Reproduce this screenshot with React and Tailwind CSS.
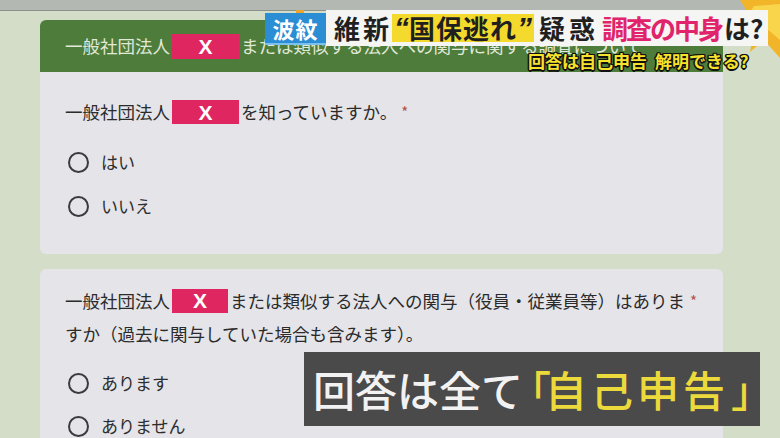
import React from 'react';

const jp = { fontFamily: '"Noto Sans CJK JP", "Noto Sans", sans-serif' };
const latin = { fontFamily: '"Liberation Sans", Arial, sans-serif' };

function Redact({ className = '' }) {
  return (
    <span
      className={`inline-flex items-center justify-center w-[67px] h-[24px] bg-[#df2660] text-white text-[21px] font-bold leading-none mx-[2px] align-middle ${className}`}
      style={latin}
    >
      X
    </span>
  );
}

function Radio({ label }) {
  return (
    <div className="flex items-center h-[24px]">
      <span className="w-[21px] h-[21px] rounded-full border-2 border-[#3b3b3b]" />
      <span className="ml-[12px] text-[17px] text-[#2d2d2d]">{label}</span>
    </div>
  );
}

export default function App() {
  return (
    <div className="relative w-[780px] h-[438px] overflow-hidden bg-[#d3ddc7]" style={jp}>
      {/* monitor top edge */}
      <div className="h-[11px] bg-[#b4b8b2] border-b border-[#8d918b]" />

      {/* form */}
      <div className="ml-[40px] w-[683px] mt-[9px]">
        <div className="h-[52px] bg-[#4e7c3b] rounded-t-[6px] pl-[25px] flex items-center text-[17.5px] text-[#e1e9d8] whitespace-nowrap overflow-hidden">
          一般社団法人
          <Redact className="h-[25px]" />
          または類似する法人への関与に関する調査について
        </div>

        <div className="h-[182px] bg-[#e4e4e9] rounded-b-[6px] pl-[25px] pt-[27px]">
          <div className="flex items-center h-[26px] text-[17.5px] text-[#2b2b2b]">
            一般社団法人
            <Redact />
            を知っていますか。
            <span className="ml-[4px] text-[#b5524a] text-[15px]">*</span>
          </div>
          <div className="pl-[3px] mt-[25px] flex flex-col gap-[20px]">
            <Radio label="はい" />
            <Radio label="いいえ" />
          </div>
        </div>

        <div className="mt-[15px] h-[200px] bg-[#e4e4e9] rounded-t-[6px] pl-[25px] pt-[15px]">
          <div className="flex items-start text-[17.5px] text-[#2b2b2b] leading-[33px]">
            <div className="w-[620px]">
              <div className="flex items-center whitespace-nowrap">
                一般社団法人
                <Redact />
                または類似する法人への関与（役員・従業員等）はありま
              </div>
              <div className="whitespace-nowrap">すか（過去に関与していた場合も含みます）。</div>
            </div>
            <span className="ml-[5px] text-[#b5524a] text-[15px]">*</span>
          </div>
          <div className="pl-[3px] mt-[21px] flex flex-col gap-[19px]">
            <Radio label="あります" />
            <Radio label="ありません" />
          </div>
        </div>
      </div>

      {/* starburst decoration */}
      <svg className="absolute right-0 top-0" width="60" height="62" viewBox="0 0 60 62">
        <polygon points="20,0 60,0 60,58 44,40 30,52 34,30 12,24 30,16" fill="#f2b52a" />
        <polygon points="34,6 60,4 60,40 46,28 40,36 40,22 26,18" fill="#f8d54a" />
      </svg>
      <div className="absolute left-[296px] top-[10px] w-[8px] h-[8px] bg-[#eea52a]" />

      {/* title bar */}
      <div className="absolute left-[326px] top-[10px] w-[442px] h-[36px] bg-[#f5f5f3] flex items-center pl-[8px] font-bold text-[26px] leading-none text-[#1f1f1f] whitespace-nowrap">
        <span className="tracking-[3px]">維新</span>
        <span className="bg-[#f4da2c] h-[28px] flex items-center px-[2px]">
          <span style={latin} className="text-[30px] italic">“</span>
          <span className="tracking-[1px]">国保逃れ</span>
          <span style={latin} className="text-[30px] italic">”</span>
        </span>
        <span className="ml-[5px] tracking-[4px]">疑惑</span>
        <span className="ml-[3px] text-[#e0236a] tracking-[-2px]">調査の中身</span>
        <span className="ml-[2px]">は?</span>
      </div>
      <div className="absolute left-[265px] top-[13px] w-[61px] h-[32px] bg-[#2b8dd3] flex items-center justify-center text-white font-bold text-[22px] tracking-[1px] border-b-2 border-[#7cc0ee]">
        波紋
      </div>

      {/* subtitle */}
      <div
        className="absolute left-[528px] top-[50px] text-[17px] font-bold leading-[22px] text-[#f6e22c] whitespace-nowrap"
        style={{ textShadow: '1.5px 0 #111, -1.5px 0 #111, 0 1.5px #111, 0 -1.5px #111, 1px 1px #111, -1px -1px #111, 1px -1px #111, -1px 1px #111' }}
      >
        回答は自己申告<span className="inline-block w-[8px]" />解明できる?
      </div>

      {/* bottom caption */}
      <div className="absolute left-[304px] top-[352px] w-[456px] h-[74px] bg-[#4a4a4a] flex items-center pl-[9px] text-[42px] leading-none whitespace-nowrap font-medium">
        <span className="text-[#f2f2f2]">回答は全て</span>
        <span className="text-[#ecd93b] ml-[-14px] mr-[-6px]">「</span>
        <span className="text-[#ecd93b] tracking-[4px]">自己申告</span>
        <span className="text-[#ecd93b] ml-[2px]">」</span>
      </div>
    </div>
  );
}
